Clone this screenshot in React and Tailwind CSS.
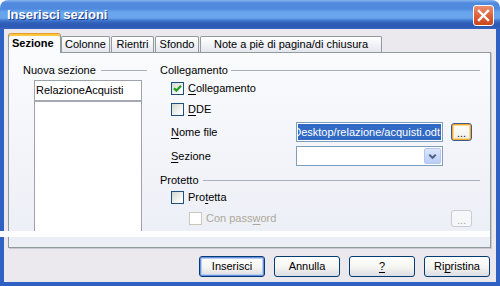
import React from "react";

function Key({ children }) {
  return <span className="underline decoration-1 underline-offset-[2px]">{children}</span>;
}

function CheckBox({ checked = false, disabled = false }) {
  return (
    <span
      className={`flex h-[13px] w-[13px] shrink-0 items-center justify-center border ${
        disabled
          ? "border-[#cac8bb] bg-white"
          : "border-[#1c5180] bg-[linear-gradient(135deg,#d6d6d0,#ffffff_85%)]"
      }`}
    >
      {checked && (
        <svg width="9" height="9" viewBox="0 0 9 9">
          <path d="M1 4.2 L3.4 6.6 L8 1.8" fill="none" stroke="#21a121" strokeWidth="2.2" />
        </svg>
      )}
    </span>
  );
}

function GroupTitle({ children, gap = "ml-[4px]", end = "" }) {
  return (
    <div className={`flex h-[13px] items-center ${end}`}>
      <span className="whitespace-nowrap">{children}</span>
      <span className={`h-px flex-1 bg-[#a9afc0] ${gap}`} />
    </div>
  );
}

function DotsButton({ disabled = false }) {
  return (
    <div
      className={`ml-[8px] flex w-[21px] items-center justify-center rounded-[3px] border text-[11px] leading-none ${
        disabled
          ? "h-[17px] border-[#cacad0] bg-[#f6f7fa] text-[#aca899]"
          : "h-[18px] border-[#3b5b8f] bg-[linear-gradient(180deg,#ffffff,#eeeee8)] text-[#222] shadow-[inset_0_0_0_1px_#f0a830,inset_0_0_0_2px_#fdd890]"
      }`}
    >
      <span className="mt-[3px]">...</span>
    </div>
  );
}

function DlgButton({ children, isDefault = false }) {
  return (
    <button
      className={`flex h-[21px] w-[66px] items-center justify-center rounded-[3px] border border-[#003c74] bg-[linear-gradient(180deg,#ffffff,#f4f4f0_55%,#dcdce4)] text-[11px] text-black ${
        isDefault ? "shadow-[inset_0_0_0_1px_#6d8fe0,inset_0_0_0_2px_#b8cef5]" : ""
      }`}
    >
      {children}
    </button>
  );
}

export default function App() {
  return (
    <div className="relative flex h-[286px] w-[500px] flex-col overflow-hidden rounded-t-[8px] bg-white font-['Liberation_Sans',Arial,sans-serif] text-[11px] text-black">
      {/* Title bar */}
      <div className="flex h-[29px] shrink-0 items-start bg-[linear-gradient(180deg,#86b4ef_0px,#4f8ade_3px,#4f8ade_9px,#68a5ec_12px,#68a5ec_18px,#3a70c8_21px,#2c5ab4_24px,#2c5ab4_27px,#3b66c0_29px)] pl-[7px]">
        <span className="mt-[8px] text-[13px] font-bold leading-none text-white [text-shadow:1px_1px_0_#1e3a8a]">
          Inserisci sezioni
        </span>
        <div className="ml-auto mr-[6px] mt-[5px] flex h-[21px] w-[21px] items-center justify-center rounded-[3px] border border-white bg-[linear-gradient(180deg,#ea8f70,#dc5a32_60%,#c9471f)]">
          <svg width="13" height="13" viewBox="0 0 13 13">
            <path d="M2 2 L11 11 M11 2 L2 11" stroke="white" strokeWidth="2.4" strokeLinecap="square" />
          </svg>
        </div>
      </div>

      {/* Body with frame */}
      <div className="flex flex-1 flex-col border-x-4 border-b-4 border-[#2f60c4] bg-[#ebe9ed]">
        {/* Tabs */}
        <div className="mt-[4px] flex h-[19px] items-end pl-[4px]">
          <div className="relative z-10 -mb-px flex h-[20px] w-[53px] items-center rounded-t-[3px] border-x border-t border-x-[#919b9c] border-t-[#e59a2a] bg-[#fafbfd] pl-[3px] font-bold shadow-[inset_0_2px_0_#ffc640]">
            Sezione
          </div>
          <div className="flex h-[16px] w-[49px] items-center justify-center rounded-t-[2px] border-x border-t border-[#919b9c] bg-[linear-gradient(180deg,#ffffff,#e4e7ef)]">
            Colonne
          </div>
          <div className="ml-px flex h-[16px] w-[43px] items-center justify-center rounded-t-[2px] border-x border-t border-[#919b9c] bg-[linear-gradient(180deg,#ffffff,#e4e7ef)]">
            Rientri
          </div>
          <div className="ml-px flex h-[16px] w-[44px] items-center justify-center rounded-t-[2px] border-x border-t border-[#919b9c] bg-[linear-gradient(180deg,#ffffff,#e4e7ef)]">
            Sfondo
          </div>
          <div className="ml-px flex h-[16px] w-[182px] items-center justify-center rounded-t-[2px] border-x border-t border-[#919b9c] bg-[linear-gradient(180deg,#ffffff,#e4e7ef)]">
            Note a piè di pagina/di chiusura
          </div>
        </div>

        {/* Panel */}
        <div className="ml-[4px] flex h-[196px] w-[483px] border border-[#919b9c] bg-[linear-gradient(180deg,#fafbfd,#eceef6)] pt-[11px] shadow-[1px_1px_0_#c9c9d2]">
          {/* Left column */}
          <div className="flex w-[151px] flex-col pl-[14px] pr-[13px]">
            <GroupTitle gap="ml-[5px]">Nuova sezione</GroupTitle>
            <div className="ml-[11px] mt-[3px] flex h-[154px] w-[108px] flex-col border border-[#9ea2ab] bg-white">
              <div className="flex h-[21px] items-center border-b-2 border-[#a7a9b0] pl-[1px]">
                RelazioneAcquisti
              </div>
            </div>
          </div>

          {/* Right column */}
          <div className="flex w-[320px] flex-col">
            <GroupTitle gap="ml-[3px]">Collegamento</GroupTitle>

            <div className="mt-[5px] flex h-[13px] items-center pl-[11px]">
              <CheckBox checked />
              <span className="ml-[4px]">
                <Key>C</Key>ollegamento
              </span>
            </div>

            <div className="mt-[8px] flex h-[13px] items-center pl-[11px]">
              <CheckBox />
              <span className="ml-[4px]">
                <Key>D</Key>DE
              </span>
            </div>

            <div className="mt-[6px] flex h-[20px] items-center pl-[11px]">
              <span className="w-[125px]">
                <Key>N</Key>ome file
              </span>
              <div className="flex h-[20px] w-[147px] border border-[#7f9db9] bg-white p-px">
                <div className="flex flex-1 items-center justify-end overflow-hidden whitespace-nowrap bg-[#316ac5] pr-px text-white">
                  Desktop/relazione/acquisti.odt
                </div>
              </div>
              <DotsButton />
            </div>

            <div className="mt-[4px] flex h-[20px] items-center pl-[11px]">
              <span className="w-[125px]">
                <Key>S</Key>ezione
              </span>
              <div className="flex h-[20px] w-[147px] justify-end border border-[#7f9db9] bg-white p-px">
                <div className="flex w-[17px] items-center justify-center rounded-[2px] border border-[#b4c6f0] bg-[linear-gradient(180deg,#dce7fd,#b9cdf9)]">
                  <svg width="9" height="7" viewBox="0 0 9 7">
                    <path d="M1.2 1.6 L4.5 4.8 L7.8 1.6" fill="none" stroke="#4d6185" strokeWidth="2" />
                  </svg>
                </div>
              </div>
            </div>

            <GroupTitle gap="ml-[4px]" end="mt-[8px]">Protetto</GroupTitle>

            <div className="mt-[4px] flex h-[13px] items-center pl-[11px]">
              <CheckBox />
              <span className="ml-[4px]">
                Pro<Key>t</Key>etta
              </span>
            </div>

            <div className="mt-[6px] flex h-[17px] items-center pl-[29px]">
              <CheckBox disabled />
              <span className="ml-[4px] flex-1 text-[#aca899]">
                Con pass<Key>w</Key>ord
              </span>
              <div className="mr-[8px] flex">
                <DotsButton disabled />
              </div>
            </div>
          </div>
        </div>

        {/* Buttons */}
        <div className="mt-[8px] flex justify-end gap-[9px] pr-[6px]">
          <DlgButton isDefault>Inserisci</DlgButton>
          <DlgButton>Annulla</DlgButton>
          <DlgButton>
            <Key>?</Key>
          </DlgButton>
          <DlgButton>
            Ri<Key>p</Key>ristina
          </DlgButton>
        </div>
      </div>

      {/* capture artefact strip */}
      <div className="absolute left-0 top-[231px] h-[6px] w-[490px] bg-white" />
    </div>
  );
}
